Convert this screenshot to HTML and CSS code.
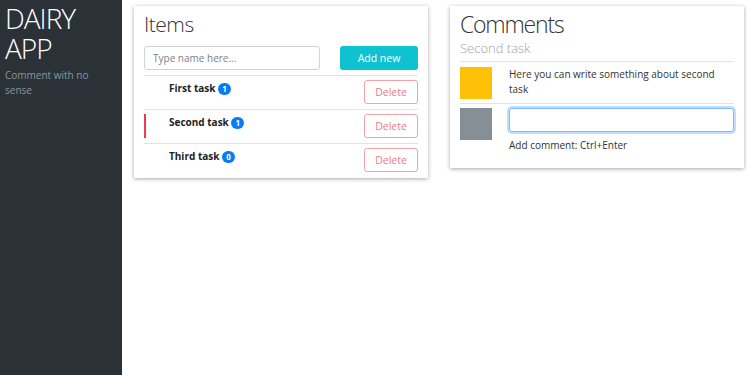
FILE: index.html
```html
<!DOCTYPE html>
<html lang="en">
  <head>
    <meta charset="UTF-8" />
    <meta name="viewport" content="width=device-width, initial-scale=1.0" />
    <title>Dairy App</title>
    <link rel="stylesheet" href="styles.css">
  </head>
  <body>
    <aside class="sidebar">
      <h1>DAIRY APP</h1>
      <p>Comment with no sense</p>
    </aside>

    <main class="content">
      <section class="card items">
        <h2>Items</h2>
        <form class="add-form">
          <input type="text" placeholder="Type name here..." />
          <button type="button" class="btn-add">Add new</button>
        </form>
        <ul class="task-list">
          <li class="task">
            <span class="task-name">First task <span class="badge">1</span></span>
            <button class="btn-delete">Delete</button>
          </li>
          <li class="task active">
            <span class="task-name">Second task <span class="badge">1</span></span>
            <button class="btn-delete">Delete</button>
          </li>
          <li class="task">
            <span class="task-name">Third task <span class="badge">0</span></span>
            <button class="btn-delete">Delete</button>
          </li>
        </ul>
      </section>

      <section class="card comments">
        <h2>Comments</h2>
        <h3>Second task</h3>
        <div class="comment">
          <div class="avatar yellow"></div>
          <p>Here you can write something about second task</p>
        </div>
        <div class="comment new">
          <div class="avatar grey"></div>
          <div class="comment-form">
            <input type="text" class="focused" />
            <small>Add comment: Ctrl+Enter</small>
          </div>
        </div>
      </section>
    </main>
  </body>
</html>
```

FILE: styles.css
```css
body {
  font-family: "Open Sans", "Noto Sans", sans-serif;
  margin: 0;
  padding: 0;
  display: flex;
  min-height: 100vh;
  background-color: #fff;
  color: #212529;
}
.sidebar {
  width: 122px;
  flex-shrink: 0;
  background-color: #2b3237;
  padding: 3px 5px;
  box-sizing: border-box;
}
.sidebar h1 {
  color: #fff;
  font-weight: 300;
  font-size: 28px;
  letter-spacing: -1px;
  line-height: 30px;
  margin: 0 0 5px;
}
.sidebar p {
  color: #8c959d;
  font-size: 10px;
  line-height: 15px;
  margin: 0;
}
.content {
  display: flex;
  align-items: flex-start;
  gap: 22px;
  padding: 6px 12px;
}
.card {
  width: 294px;
  box-sizing: border-box;
  background-color: #fff;
  box-shadow: 0 1px 4px rgba(0, 0, 0, 0.35);
  padding: 5px 10px 1px;
}
.card h2 {
  font-weight: 300;
  font-size: 21px;
  letter-spacing: -0.5px;
  line-height: 26px;
  margin: 0;
  color: #333;
}
.add-form {
  display: flex;
  justify-content: space-between;
  margin: 9px 0 0;
  padding-bottom: 5px;
  border-bottom: 1px solid #e3e3e3;
}
.add-form input {
  width: 176px;
  height: 24px;
  box-sizing: border-box;
  border: 1px solid #ced4da;
  border-radius: 3px;
  padding: 0 8px;
  font-family: inherit;
  font-size: 10px;
}
.add-form input::placeholder {
  color: #7b828a;
}
.btn-add {
  width: 78px;
  height: 24px;
  border: none;
  border-radius: 3px;
  background-color: #0fc2d0;
  color: #fff;
  font-family: inherit;
  font-size: 10.5px;
}
.task-list {
  list-style: none;
  margin: 0;
  padding: 0;
}
.task {
  display: flex;
  align-items: flex-start;
  padding: 4px 0 5px;
  border-top: 1px solid #e3e3e3;
}
.task:first-child {
  border-top: none;
}
.task-name {
  height: 24px;
  padding-left: 23px;
  border-left: 2px solid transparent;
  font-size: 10px;
  font-weight: 700;
  line-height: 16px;
  color: #222;
}
.task.active .task-name {
  border-left-color: #f0384e;
}
.badge {
  display: inline-block;
  min-width: 13px;
  height: 12px;
  box-sizing: border-box;
  padding: 0 4px;
  border-radius: 6px;
  background-color: #0a7bf5;
  color: #fff;
  font-size: 8px;
  line-height: 12px;
  text-align: center;
}
.btn-delete {
  margin-left: auto;
  width: 54px;
  height: 24px;
  background: #fff;
  border: 1px solid #f7a0a6;
  border-radius: 3px;
  color: #f07b84;
  font-family: inherit;
  font-size: 10.5px;
}
.comments {
  padding: 4px 10px 10px;
}
.comments h2 {
  font-size: 23px;
  letter-spacing: -1.2px;
  line-height: 28px;
}
.comments h3 {
  font-weight: 300;
  font-size: 13px;
  line-height: 18px;
  color: #9ca3aa;
  margin: 1px 0 0;
  padding-bottom: 4px;
  border-bottom: 1px solid #e3e3e3;
}
.comment {
  display: flex;
  gap: 17px;
  padding: 5px 0 4px;
}
.comment + .comment {
  border-top: 1px solid #e3e3e3;
  padding: 4px 0 5px;
}
.avatar {
  width: 32px;
  height: 32px;
  flex-shrink: 0;
}
.yellow {
  background-color: #ffc107;
}
.grey {
  background-color: #868e96;
}
.comment p {
  margin: 0;
  font-size: 10px;
  line-height: 15px;
  color: #333;
}
.comment-form {
  flex: 1;
}
.comment-form input {
  display: block;
  width: 100%;
  height: 24px;
  box-sizing: border-box;
  border: 1px solid #80bdff;
  border-radius: 3px;
  box-shadow: 0 0 0 2px rgba(0, 123, 255, 0.25);
  outline: none;
}
.comment-form small {
  display: block;
  font-size: 10px;
  line-height: 15px;
  margin-top: 6px;
  color: #333;
}
```
